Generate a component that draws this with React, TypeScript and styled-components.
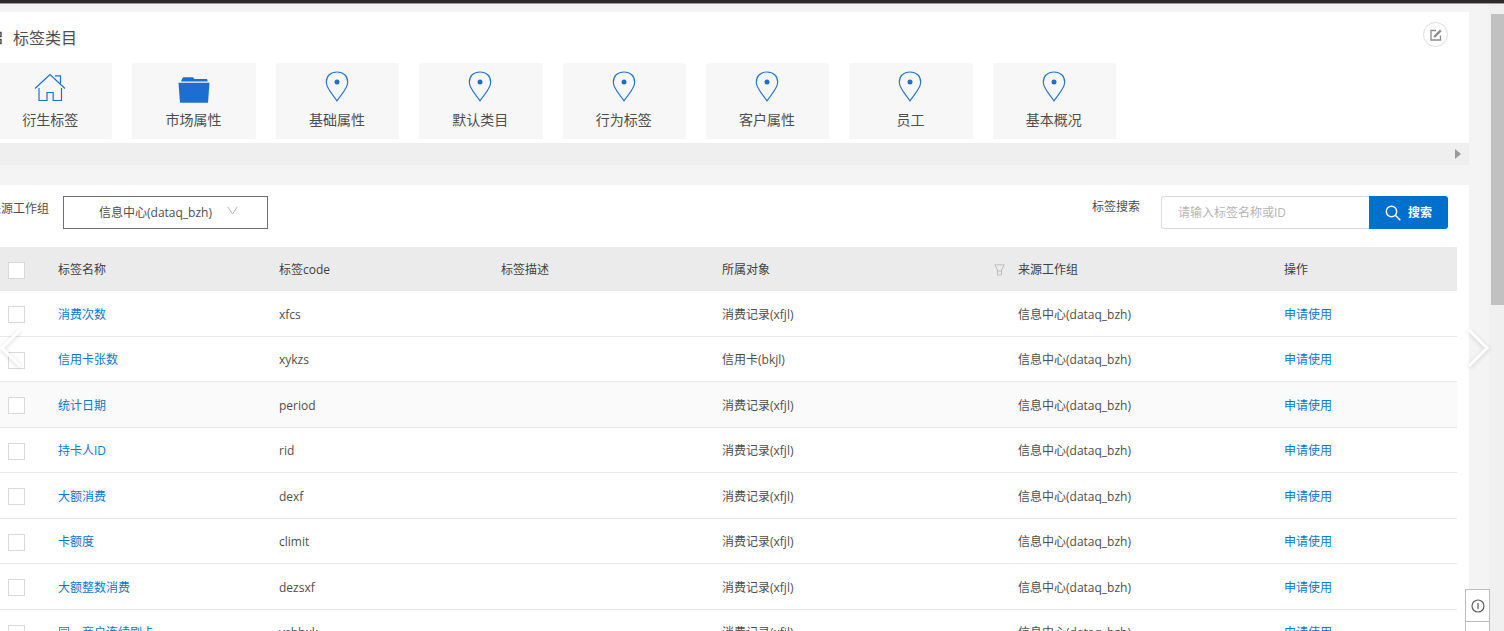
import React from "react";
import styled, { createGlobalStyle, css } from "styled-components";

const GlobalStyle = createGlobalStyle`
  *, *::before, *::after { box-sizing: border-box; }
  body {
    margin: 0;
    background: #f4f4f4;
    color: #4e4e4e;
    font: 12px/18px "Open Sans", "Noto Sans CJK SC", sans-serif;
  }
  button, input, select { font: inherit; color: inherit; margin: 0; }
`;

const Shell = styled.div`
  position: relative;
  display: flex;
  flex-direction: column;
  height: 100vh;
  overflow: hidden;
`;

const TopEdge = styled.header`
  flex: none;
  height: 4px;
  background: #2b292a;
  border-bottom: 1px solid #9a9a9a;
`;

const Body = styled.div`
  display: flex;
  flex: 1;
  min-height: 0;
`;

const Content = styled.main`
  flex: 1;
  min-width: 0;
  padding: 8px 20px 0 0;
  overflow: hidden;
`;

const Panel = styled.section`
  margin-left: -23px;
  padding: 0 12px;
  background: #fff;
`;

const ScrollTrack = styled.aside`
  flex: none;
  width: 15px;
  padding: 10px 0 0 2px;
  background: #f0f0f0;
`;

const ScrollThumb = styled.div`
  height: 291px;
  background: #c1c1c1;
`;

const TitleRow = styled.div`
  display: flex;
  align-items: center;
  justify-content: space-between;
  height: 51px;
  padding-right: 9px;
`;

const Title = styled.h1`
  display: flex;
  align-items: center;
  gap: 11px;
  margin: 0;
  font-size: 16px;
  font-weight: 400;
  line-height: 24px;
`;

const EditButton = styled.button`
  display: grid;
  place-items: center;
  width: 25px;
  height: 25px;
  margin-bottom: 6px;
  padding: 0;
  border: 1px solid #dedede;
  border-radius: 50%;
  background: #fff;
`;

const Cards = styled.div`
  display: grid;
  grid-template-columns: repeat(8, 1fr);
  gap: 20px;
  max-width: 1127px;
  padding-bottom: 4px;
`;

const Card = styled.button`
  display: flex;
  flex-direction: column;
  align-items: center;
  gap: 5px;
  height: 76px;
  padding: 8px 1px 0 0;
  border: 0;
  border-radius: 2px;
  background: #f7f7f7;
  font-size: 14px;
  line-height: 24px;
`;

const SideScroll = styled.div`
  display: flex;
  align-items: center;
  justify-content: flex-end;
  height: 22px;
  margin-bottom: 20px;
  padding-right: 8px;
  background: #efefef;
`;

const Toolbar = styled.div`
  display: flex;
  justify-content: space-between;
  padding: 11px 9px 18px 0;
`;

const Group = styled.div`
  display: flex;
  gap: ${(p: { $gap: number }) => p.$gap}px;
`;

const FieldLabel = styled.label<{ $drop: number }>`
  padding-top: ${(p) => p.$drop}px;
`;

const SelectBox = styled.div`
  position: relative;
  svg { position: absolute; top: 10px; right: 30px; pointer-events: none; }
`;

const Select = styled.select`
  display: block;
  appearance: none;
  width: 205px;
  height: 33px;
  padding: 0 0 0 35px;
  border: 1px solid #707070;
  border-radius: 0;
  background: #fff;
`;

const SearchForm = styled.form`
  display: flex;
`;

const SearchInput = styled.input`
  width: 208px;
  height: 33px;
  padding: 0 16px;
  border: 1px solid #dcdcdc;
  border-right: 0;
  border-radius: 3px 0 0 3px;
  background: #fff;
  &::placeholder { color: #b5b5b5; opacity: 1; }
`;

const SearchButton = styled.button`
  display: flex;
  align-items: center;
  justify-content: center;
  gap: 7px;
  width: 79px;
  height: 33px;
  padding: 0;
  border: 0;
  border-radius: 0 3px 3px 0;
  background: #0070cc;
  color: #fff;
  font-weight: 700;
`;

const Table = styled.table`
  width: 100%;
  table-layout: fixed;
  border-collapse: separate;
  border-spacing: 0;
`;

const Col = styled.col`
  width: ${(p: { $w: number }) => p.$w}px;
`;

const cell = css`
  padding: 2px 10px 0;
  text-align: left;
  font-weight: 400;
  white-space: nowrap;
  &:first-child { padding-left: 19px; }
`;

const HeadCell = styled.th`
  ${cell}
  height: 44px;
  background: #ebebeb;
  color: #404040;
`;

const Row = styled.tr`
  height: 45px;
  background: ${(p: { $hovered?: boolean }) => (p.$hovered ? "#fafafa" : "#fff")};
  &:nth-child(odd) { height: 46px; }
`;

const Cell = styled.td`
  ${cell}
  border-bottom: 1px solid #e8e8e8;
`;

const HeadWithFilter = styled.div`
  display: flex;
  align-items: center;
  justify-content: space-between;
  padding-right: 3px;
  margin-right: -10px;
`;

const Check = styled.input`
  display: block;
  appearance: none;
  width: 17px;
  height: 17px;
  border: 1px solid #d9d9d9;
  background: #fff;
`;

const Link = styled.a`
  color: #0f76cc;
  text-decoration: none;
`;

const Pager = styled.button<{ $side: "left" | "right" }>`
  position: absolute;
  top: 325px;
  ${(p) => (p.$side === "left" ? "left: -2px;" : "right: 13px;")}
  padding: 0;
  border: 0;
  background: none;
  svg { display: block; filter: drop-shadow(0 1px 2px rgba(0, 0, 0, 0.16)); }
`;

const FloatTools = styled.div`
  position: absolute;
  right: 14px;
  bottom: -23px;
  display: flex;
  flex-direction: column;
  width: 25px;
  border: 1px solid #bcbcbc;
  background: #fff;
`;

const ToolButton = styled.button`
  display: grid;
  place-items: center;
  height: 31px;
  padding: 0;
  border: 0;
  background: none;
  & + & { border-top: 1px solid #bcbcbc; height: 32px; }
`;

const TreeIcon = () => (
  <svg width="13" height="14" viewBox="0 0 13 14" fill="none" stroke="#4a4a4a">
    <path d="M.5 1.5h4v4h-4zM8 1.5h4v4H8zM.5 8.5h4v4h-4zM8 8.5h4v4H8z" strokeWidth="1.400" />
  </svg>
);

const HouseIcon = () => (
  <svg width="32" height="32" viewBox="0 0 32 32" fill="none" stroke="#1e6fc8" strokeWidth="1.200">
    <path d="M1 17.500 16 3.500l15 14M5 17v12.500h8V21.500h6.200v8H27.500V17M21 4.800h5.500v7.500" />
  </svg>
);

const FolderIcon = () => (
  <svg width="32" height="32" viewBox="0 0 32 32" fill="#1d6fcf">
    <path d="M3 10.500 4.200 7.500 5.500 6.200H15l1.500 1.800H29l.8 2.500z" />
    <path d="M.5 11.800h31L30 31.800H2z" />
  </svg>
);

const PinIcon = () => (
  <svg width="32" height="32" viewBox="0 0 32 32">
    <path
      d="M16 29.800C12 23.800 5.300 17.500 5.300 11.300 5.300 5 9.500 1 16 1s10.700 4 10.700 10.300C26.700 17.500 20 23.800 16 29.800z"
      fill="none"
      stroke="#2a78cc"
      strokeWidth="1.200"
    />
    <circle cx="16" cy="11" r="2.500" fill="#1e6fc8" />
  </svg>
);

const EditIcon = () => (
  <svg width="12" height="12" viewBox="0 0 12 12" fill="none" stroke="#8c8c8c">
    <path d="M6 1.500H1v9.500h9.500V6.500" strokeWidth="1.300" />
    <path d="M4.200 8 10.800 1.400" strokeWidth="2.400" />
  </svg>
);

const ArrowRight = () => (
  <svg width="6" height="10" viewBox="0 0 6 10" fill="#9b9b9b">
    <path d="M0 0 6 5 0 10z" />
  </svg>
);

const ChevronDown = () => (
  <svg width="11" height="9" viewBox="0 0 11 9" fill="none" stroke="#b4b4b4">
    <path d="M.8.8 5.500 8l4.700-7.200" />
  </svg>
);

const SearchIcon = () => (
  <svg width="16" height="16" viewBox="0 0 16 16" fill="none" stroke="#fff" strokeWidth="1.400">
    <circle cx="6.500" cy="6.500" r="5.200" />
    <path d="m10.300 10.300 5 5" />
  </svg>
);

const FilterIcon = () => (
  <svg width="11" height="12" viewBox="0 0 11 12" fill="none" stroke="#bdbdbd">
    <path d="M.8.8h9.400L7.500 6v5h-4V6zM3.500 7h4" />
  </svg>
);

const Chevron = ({ flip }: { flip?: boolean }) => (
  <svg width="25" height="46" viewBox="0 0 25 46" fill="none" stroke="#fff" strokeWidth="3">
    <path d={flip ? "M22 5 4 23l18 18" : "M3 5l18 18L3 41"} />
  </svg>
);

const InfoIcon = () => (
  <svg width="14" height="14" viewBox="0 0 14 14" fill="none" stroke="#5c5c5c">
    <circle cx="7" cy="7" r="6" strokeWidth="1.200" />
    <path d="M7 4v6" strokeWidth="1.200" />
  </svg>
);

const RingIcon = () => (
  <svg width="14" height="14" viewBox="0 0 14 14" fill="none" stroke="#5c5c5c">
    <circle cx="7" cy="7" r="6" />
  </svg>
);

const categories = [
  { name: "衍生标签", Icon: HouseIcon },
  { name: "市场属性", Icon: FolderIcon },
  { name: "基础属性", Icon: PinIcon },
  { name: "默认类目", Icon: PinIcon },
  { name: "行为标签", Icon: PinIcon },
  { name: "客户属性", Icon: PinIcon },
  { name: "员工", Icon: PinIcon },
  { name: "基本概况", Icon: PinIcon },
];

const columns = [59, 221, 222, 221, 296, 266, 183];

const tags = [
  { name: "消费次数", code: "xfcs", target: "消费记录(xfjl)" },
  { name: "信用卡张数", code: "xykzs", target: "信用卡(bkjl)" },
  { name: "统计日期", code: "period", target: "消费记录(xfjl)", hovered: true },
  { name: "持卡人ID", code: "rid", target: "消费记录(xfjl)" },
  { name: "大额消费", code: "dexf", target: "消费记录(xfjl)" },
  { name: "卡额度", code: "climit", target: "消费记录(xfjl)" },
  { name: "大额整数消费", code: "dezsxf", target: "消费记录(xfjl)" },
  { name: "同一商户连续刷卡", code: "yshhxk", target: "消费记录(xfjl)" },
];

const GROUP_NAME = "信息中心(dataq_bzh)";

export default function App() {
  return (
    <Shell>
      <GlobalStyle />
      <TopEdge />
      <Body>
        <Content>
          <Panel>
            <TitleRow>
              <Title>
                <TreeIcon />
                标签类目
              </Title>
              <EditButton aria-label="编辑">
                <EditIcon />
              </EditButton>
            </TitleRow>
            <Cards>
              {categories.map(({ name, Icon }) => (
                <Card key={name}>
                  <Icon />
                  {name}
                </Card>
              ))}
            </Cards>
          </Panel>
          <SideScroll>
            <ArrowRight />
          </SideScroll>
          <Panel>
            <Toolbar>
              <Group $gap={14}>
                <FieldLabel $drop={4} htmlFor="group">
                  来源工作组
                </FieldLabel>
                <SelectBox>
                  <Select id="group">
                    <option>{GROUP_NAME}</option>
                  </Select>
                  <ChevronDown />
                </SelectBox>
              </Group>
              <Group $gap={21}>
                <FieldLabel $drop={2} htmlFor="search">
                  标签搜索
                </FieldLabel>
                <SearchForm onSubmit={(e) => e.preventDefault()}>
                  <SearchInput id="search" placeholder="请输入标签名称或ID" />
                  <SearchButton>
                    <SearchIcon />
                    搜索
                  </SearchButton>
                </SearchForm>
              </Group>
            </Toolbar>
            <Table>
              <colgroup>
                {columns.map((w, i) => (
                  <Col key={i} $w={w} />
                ))}
              </colgroup>
              <thead>
                <tr>
                  <HeadCell>
                    <Check type="checkbox" aria-label="全选" />
                  </HeadCell>
                  <HeadCell>标签名称</HeadCell>
                  <HeadCell>标签code</HeadCell>
                  <HeadCell>标签描述</HeadCell>
                  <HeadCell>
                    <HeadWithFilter>
                      所属对象
                      <FilterIcon />
                    </HeadWithFilter>
                  </HeadCell>
                  <HeadCell>来源工作组</HeadCell>
                  <HeadCell>操作</HeadCell>
                </tr>
              </thead>
              <tbody>
                {tags.map((tag) => (
                  <Row key={tag.code} $hovered={tag.hovered}>
                    <Cell>
                      <Check type="checkbox" aria-label={tag.name} />
                    </Cell>
                    <Cell>
                      <Link href="#">{tag.name}</Link>
                    </Cell>
                    <Cell>{tag.code}</Cell>
                    <Cell />
                    <Cell>{tag.target}</Cell>
                    <Cell>{GROUP_NAME}</Cell>
                    <Cell>
                      <Link href="#">申请使用</Link>
                    </Cell>
                  </Row>
                ))}
              </tbody>
            </Table>
          </Panel>
        </Content>
        <ScrollTrack>
          <ScrollThumb />
        </ScrollTrack>
      </Body>
      <Pager $side="left" aria-label="上一张">
        <Chevron flip />
      </Pager>
      <Pager $side="right" aria-label="下一张">
        <Chevron />
      </Pager>
      <FloatTools>
        <ToolButton aria-label="信息">
          <InfoIcon />
        </ToolButton>
        <ToolButton aria-label="帮助">
          <RingIcon />
        </ToolButton>
      </FloatTools>
    </Shell>
  );
}
